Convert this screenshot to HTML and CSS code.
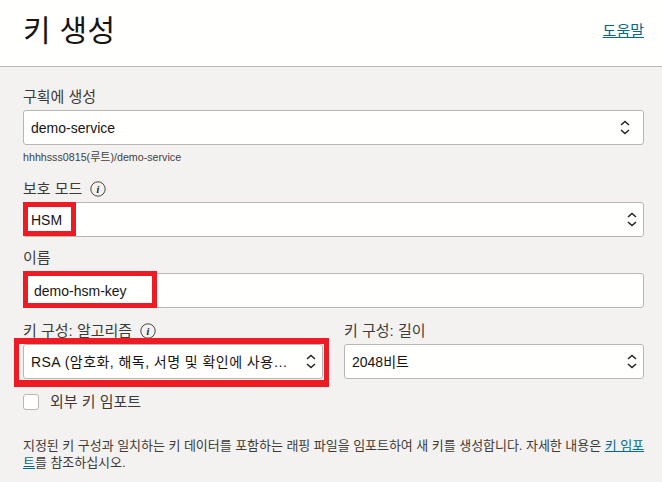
FILE: index.html
```html
<!DOCTYPE html>
<html lang="ko">
<head>
<meta charset="utf-8">
<title>키 생성</title>
<link rel="stylesheet" href="styles.css">
</head>
<body>
<header class="header">
  <h1 class="title">키 생성</h1>
  <a class="help" href="#">도움말</a>
</header>
<main class="form">
  <div class="field">
    <label class="label">구획에 생성</label>
    <div class="control first">
      <span class="value">demo-service</span>
      <svg class="updown" width="10" height="15" viewBox="0 0 10 15"><path d="M1 5 5 1.5 9 5M1 10l4 3.5 4-3.5"/></svg>
    </div>
    <div class="hint">hhhhsss0815(<span class="hint-ko">루트</span>)/demo-service</div>
  </div>
  <div class="field mode">
    <label class="label">보호 모드<svg class="info" width="16" height="16" viewBox="0 0 16 16"><circle cx="8" cy="8" r="7.2"/><text x="8" y="11.5" text-anchor="middle">i</text></svg></label>
    <div class="control">
      <span class="value">HSM</span>
      <svg class="updown" width="10" height="15" viewBox="0 0 10 15"><path d="M1 5 5 1.5 9 5M1 10l4 3.5 4-3.5"/></svg>
    </div>
    <i class="mark mark-mode"></i>
  </div>
  <div class="field name">
    <label class="label">이름</label>
    <div class="control text"><span class="value">demo-hsm-key</span></div>
    <i class="mark mark-name"></i>
  </div>
  <div class="row">
    <div class="field algo">
      <label class="label">키 구성: 알고리즘<svg class="info" width="16" height="16" viewBox="0 0 16 16"><circle cx="8" cy="8" r="7.2"/><text x="8" y="11.5" text-anchor="middle">i</text></svg></label>
      <div class="control">
        <span class="value ellipsis">RSA (암호화, 해독, 서명 및 확인에 사용가능)</span>
        <svg class="updown" width="10" height="15" viewBox="0 0 10 15"><path d="M1 5 5 1.5 9 5M1 10l4 3.5 4-3.5"/></svg>
      </div>
      <i class="mark mark-algo"></i>
    </div>
    <div class="field length">
      <label class="label">키 구성: 길이</label>
      <div class="control">
        <span class="value">2048비트</span>
        <svg class="updown" width="10" height="15" viewBox="0 0 10 15"><path d="M1 5 5 1.5 9 5M1 10l4 3.5 4-3.5"/></svg>
      </div>
    </div>
  </div>
  <label class="check"><span class="box"></span><span class="check-text">외부 키 임포트</span></label>
  <p class="note">지정된 키 구성과 일치하는 키 데이터를 포함하는 래핑 파일을 임포트하여 새 키를 생성합니다. 자세한 내용은 <a href="#">키 임포트</a>를 참조하십시오.</p>
</main>
</body>
</html>
```
FILE: styles.css
```css
* { box-sizing: border-box; }
html, body { margin: 0; height: 100%; overflow: hidden; }
body {
  width: 662px;
  height: 482px;
  background: #f3f2f1;
  color: #161513;
  font-family: "Liberation Sans", "Noto Sans CJK KR", sans-serif;
  font-size: 14px;
}
.header {
  height: 67px;
  background: #fffffd;
  border-bottom: 1px solid #bcb6b1;
  display: flex;
  justify-content: space-between;
  padding: 0 18px 0 23px;
}
.title {
  margin: 11px 0 0;
  font-size: 30px;
  line-height: 40px;
  font-weight: 400;
  letter-spacing: 0.3px;
}
.help {
  margin-top: 22px;
  font-size: 15px;
  line-height: 18px;
  height: 18px;
  color: #00688c;
  text-decoration: underline;
}
.form { padding: 21px 18px 0 23px; }
.field { position: relative; }
.label {
  display: flex;
  align-items: center;
  gap: 8px;
  height: 18px;
  line-height: 18px;
  font-size: 15px;
  color: #3f3a36;
  margin-bottom: 4px;
  white-space: pre;
}
.control {
  height: 35px;
  background: #fffffd;
  border: 1px solid #bcb6b1;
  border-radius: 3px;
  display: flex;
  align-items: center;
  justify-content: space-between;
  padding: 0 6px 0 7px;
  min-width: 0;
}
.first { padding-right: 13px; }
.value { font-size: 14px; line-height: 18px; color: #161513; }
.ellipsis { flex: 1; min-width: 0; overflow: hidden; white-space: nowrap; text-overflow: ellipsis; padding-right: 16px; letter-spacing: 0.45px; }
.text { padding-left: 10px; }
.updown { flex: none; fill: none; stroke: #262320; stroke-width: 1.5; }
.info { flex: none; fill: none; stroke: #4a4642; stroke-width: 1; }
.info text { fill: #161513; stroke: none; font-family: "Liberation Serif", serif; font-style: italic; font-weight: 700; font-size: 10px; }
.hint { margin-top: 5px; font-size: 10.7px; line-height: 14px; color: #46413d; }
.hint-ko { font-size: 11px; }
.mode { margin-top: 16px; }
.name { margin-top: 12px; }
.name .label { margin-bottom: 6px; }
.row { display: flex; gap: 21px; margin-top: 14px; }
.algo { width: 300px; flex: none; }
.length { flex: 1; }
.mark { position: absolute; display: block; border: 5px solid #ed1c24; pointer-events: none; }
.mark-mode { left: 0; top: 22px; width: 53px; height: 34px; }
.mark-name { left: 0; top: 22px; width: 134px; height: 37px; }
.mark-algo { left: -9px; top: 16px; width: 315px; height: 49px; border-width: 6px 5px 7px; }
.check { display: flex; align-items: center; gap: 11px; margin-top: 15px; height: 16px; font-size: 15px; color: #3f3a36; }
.check-text { padding-bottom: 3px; }
.box { width: 16px; height: 16px; background: #fffffd; border: 1px solid #bcb6b1; border-radius: 3px; }
.note { margin: 27px 0 0; font-size: 13px; line-height: 17px; color: #3f3a36; letter-spacing: -0.04px; }
.note a { color: #00688c; text-decoration: underline; }
```
